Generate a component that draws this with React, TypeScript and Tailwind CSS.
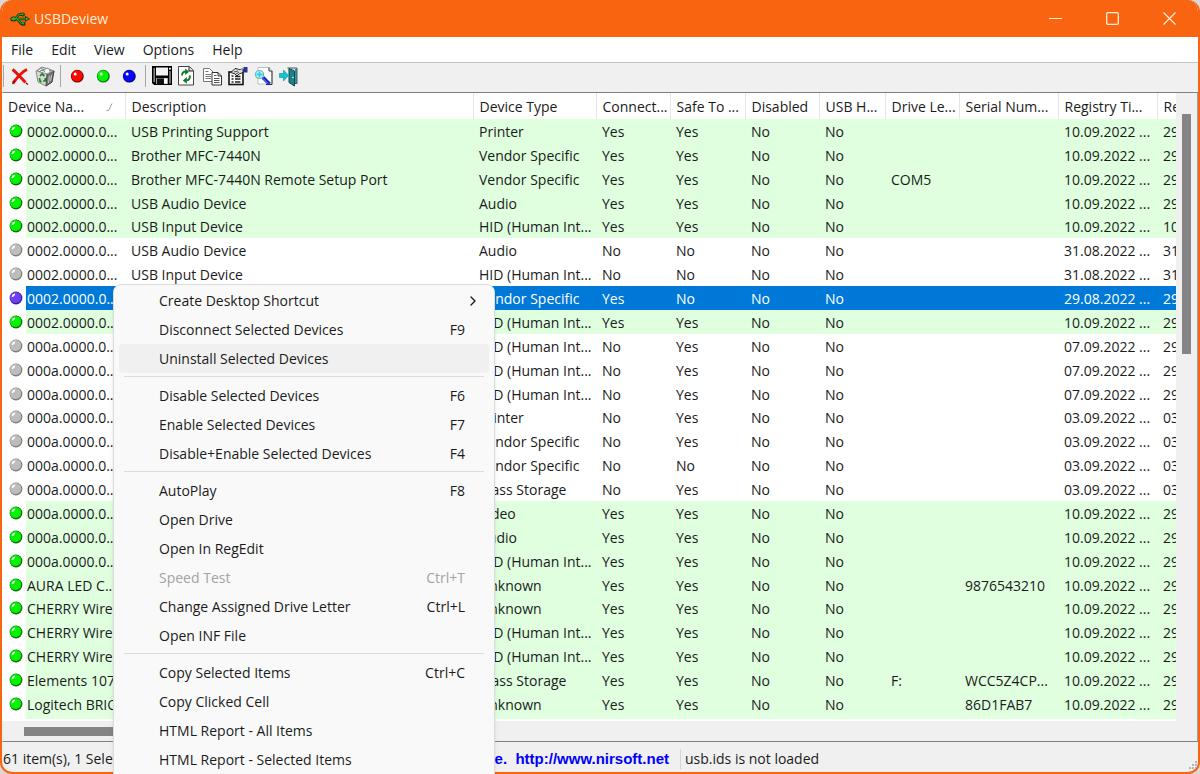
import React from 'react';
import { ChevronRight } from 'lucide-react';

type State = 'on' | 'off' | 'selected';

interface Device {
  state: State;
  cells: string[];
}

interface MenuEntry {
  label: string;
  shortcut?: string;
  disabled?: boolean;
  hover?: boolean;
  submenu?: boolean;
}

const COLUMNS = [
  { title: 'Device Na...', width: 'w-[123px]' },
  { title: 'Description', width: 'w-[348px]' },
  { title: 'Device Type', width: 'w-[123px]' },
  { title: 'Connect...', width: 'w-[74px]' },
  { title: 'Safe To ...', width: 'w-[75px]' },
  { title: 'Disabled', width: 'w-[74px]' },
  { title: 'USB H...', width: 'w-[66px]' },
  { title: 'Drive Le...', width: 'w-[74px]' },
  { title: 'Serial Num...', width: 'w-[99px]' },
  { title: 'Registry Ti...', width: 'w-[99px]' },
  { title: 'Re', width: 'w-[99px]' },
];

const d = (
  state: State, name: string, desc: string, type: string, connected: string,
  safe: string, date: string, last: string, drive = '', serial = ''
): Device => ({
  state,
  cells: [name, desc, type, connected, safe, 'No', 'No', drive, serial, date + ' ...', last],
});

const DEVICES: Device[] = [
  d('on', '0002.0000.0...', 'USB Printing Support', 'Printer', 'Yes', 'Yes', '10.09.2022', '29'),
  d('on', '0002.0000.0...', 'Brother MFC-7440N', 'Vendor Specific', 'Yes', 'Yes', '10.09.2022', '29'),
  d('on', '0002.0000.0...', 'Brother MFC-7440N Remote Setup Port', 'Vendor Specific', 'Yes', 'Yes', '10.09.2022', '29', 'COM5'),
  d('on', '0002.0000.0...', 'USB Audio Device', 'Audio', 'Yes', 'Yes', '10.09.2022', '29'),
  d('on', '0002.0000.0...', 'USB Input Device', 'HID (Human Int...', 'Yes', 'Yes', '10.09.2022', '10'),
  d('off', '0002.0000.0...', 'USB Audio Device', 'Audio', 'No', 'No', '31.08.2022', '31'),
  d('off', '0002.0000.0...', 'USB Input Device', 'HID (Human Int...', 'No', 'No', '31.08.2022', '31'),
  d('selected', '0002.0000.0...', '', 'Vendor Specific', 'Yes', 'No', '29.08.2022', '29'),
  d('on', '0002.0000.0...', '', 'HID (Human Int...', 'Yes', 'Yes', '10.09.2022', '29'),
  d('off', '000a.0000.0...', '', 'HID (Human Int...', 'No', 'Yes', '07.09.2022', '29'),
  d('off', '000a.0000.0...', '', 'HID (Human Int...', 'No', 'Yes', '07.09.2022', '29'),
  d('off', '000a.0000.0...', '', 'HID (Human Int...', 'No', 'Yes', '07.09.2022', '29'),
  d('off', '000a.0000.0...', '', 'Printer', 'No', 'Yes', '03.09.2022', '03'),
  d('off', '000a.0000.0...', '', 'Vendor Specific', 'No', 'Yes', '03.09.2022', '03'),
  d('off', '000a.0000.0...', '', 'Vendor Specific', 'No', 'No', '03.09.2022', '03'),
  d('off', '000a.0000.0...', '', 'Mass Storage', 'No', 'Yes', '03.09.2022', '03'),
  d('on', '000a.0000.0...', '', 'Video', 'Yes', 'Yes', '10.09.2022', '29'),
  d('on', '000a.0000.0...', '', 'Audio', 'Yes', 'Yes', '10.09.2022', '29'),
  d('on', '000a.0000.0...', '', 'HID (Human Int...', 'Yes', 'Yes', '10.09.2022', '29'),
  d('on', 'AURA LED C...', '', 'Unknown', 'Yes', 'Yes', '10.09.2022', '29', '', '9876543210'),
  d('on', 'CHERRY Wire...', '', 'Unknown', 'Yes', 'Yes', '10.09.2022', '29'),
  d('on', 'CHERRY Wire...', '', 'HID (Human Int...', 'Yes', 'Yes', '10.09.2022', '29'),
  d('on', 'CHERRY Wire...', '', 'HID (Human Int...', 'Yes', 'Yes', '10.09.2022', '29'),
  d('on', 'Elements 107...', '', 'Mass Storage', 'Yes', 'Yes', '10.09.2022', '29', 'F:', 'WCC5Z4CP...'),
  d('on', 'Logitech BRIO', '', 'Unknown', 'Yes', 'Yes', '10.09.2022', '29', '', '86D1FAB7'),
];

const MENU: MenuEntry[][] = [
  [
    { label: 'Create Desktop Shortcut', submenu: true },
    { label: 'Disconnect Selected Devices', shortcut: 'F9' },
    { label: 'Uninstall Selected Devices', hover: true },
  ],
  [
    { label: 'Disable Selected Devices', shortcut: 'F6' },
    { label: 'Enable Selected Devices', shortcut: 'F7' },
    { label: 'Disable+Enable Selected Devices', shortcut: 'F4' },
  ],
  [
    { label: 'AutoPlay', shortcut: 'F8' },
    { label: 'Open Drive' },
    { label: 'Open In RegEdit' },
    { label: 'Speed Test', shortcut: 'Ctrl+T', disabled: true },
    { label: 'Change Assigned Drive Letter', shortcut: 'Ctrl+L' },
    { label: 'Open INF File' },
  ],
  [
    { label: 'Copy Selected Items', shortcut: 'Ctrl+C' },
    { label: 'Copy Clicked Cell' },
    { label: 'HTML Report - All Items' },
    { label: 'HTML Report - Selected Items' },
  ],
];

const BALL: Record<State, { fill: string; edge: string }> = {
  on: { fill: '#00f400', edge: '#0b6b0b' },
  off: { fill: '#bdbdbd', edge: '#7d7d7d' },
  selected: { fill: '#7040f0', edge: '#30209a' },
};

const Ball = ({ fill, edge }: { fill: string; edge: string }) => (
  <svg viewBox="0 0 14 14" className="h-[14px] w-[14px] shrink-0">
    <circle cx="7" cy="7" r="6.4" fill={edge} />
    <circle cx="6.6" cy="6.5" r="5.6" fill={fill} />
    <path d="M3.4 5.8A3 3 0 0 1 6 3.4" stroke="#fff" strokeWidth="1.8" fill="none" />
  </svg>
);

const UsbIcon = () => (
  <svg viewBox="0 0 20 14" className="h-[14px] w-5">
    <g stroke="#10300c" strokeWidth="2.6" fill="none">
      <path d="M3 7H17M5 7L9 2.5H12M7 7L11 11.5H13" />
    </g>
    <ellipse cx="3.5" cy="7" rx="3.2" ry="2.5" fill="#10300c" />
    <path d="M15 3.8L20 7L15 9.8Z" fill="#10300c" />
    <circle cx="12.8" cy="2.5" r="2" fill="#10300c" />
    <rect x="11.5" y="9.8" width="3.8" height="3.8" fill="#10300c" />
    <g stroke="#2f9a26" strokeWidth="1.2" fill="none">
      <path d="M3 6.8H17M5 7L9 2.5H12M7 7L11 11.2H13" />
    </g>
    <ellipse cx="3.4" cy="6.8" rx="2.2" ry="1.6" fill="#35b02c" />
    <circle cx="12.7" cy="2.3" r="1.1" fill="#35b02c" />
    <rect x="12.2" y="10.4" width="2" height="2" fill="#35b02c" />
    <path d="M16 5.2L18.6 7L16 8.6Z" fill="#35b02c" />
  </svg>
);

const ToolIcon = ({ children }: { children: React.ReactNode }) => (
  <svg viewBox="0 0 26 26" className="h-[26px] w-[26px]">{children}</svg>
);

const DeleteIcon = () => (
  <ToolIcon>
    <path d="M6.5 6.5C10 9 14 14 19.5 19.5M21 6.5C15 9 11 15 7 20" stroke="#e81008" strokeWidth="2.9" fill="none" />
    <path d="M20 20L22 21.5M6.5 21L9 18" stroke="#7a0800" strokeWidth="1.3" />
  </ToolIcon>
);

const RecycleIcon = () => (
  <ToolIcon>
    <path d="M4 8L10 4L22 8L20 19L14 23L6 19Z" fill="#d9d9d9" stroke="#888" />
    <path d="M15 11L22 8L20 19L14 23Z" fill="#777" stroke="#444" />
    <path d="M5 8L9 5L12 7L15 5L21 8L15 11Z" fill="#f7f7f7" stroke="#888" />
    <path d="M7.5 8.5L10 7L13 8.5M17 8L19 7.5" stroke="#666" fill="none" />
    <path d="M8 13L10 11L12.5 13M13.5 15L13 18H11M7.5 15L8 18L9.5 19" stroke="#128a1c" strokeWidth="1.7" fill="none" />
    <path d="M17.5 13L16.5 20M19.7 12L18.5 18" stroke="#c8c8c8" />
  </ToolIcon>
);

const DotIcon = ({ fill, edge }: { fill: string; edge: string }) => (
  <ToolIcon>
    <circle cx="13.3" cy="13.2" r="6.4" fill={edge} />
    <circle cx="13" cy="12.8" r="5.6" fill={fill} />
    <circle cx="11.2" cy="11" r="1.5" fill="#fff" />
  </ToolIcon>
);

const SaveIcon = () => (
  <ToolIcon>
    <path d="M4 3H24V22H6L4 20Z" fill="#000" />
    <path d="M6.2 5V19M22 8V20.5" stroke="#9a9a9a" strokeWidth="1.4" />
    <rect x="8" y="4.5" width="12" height="8" fill="#f4f4f4" />
    <rect x="21" y="4.8" width="1.8" height="1.8" fill="#fff" />
    <rect x="8" y="15" width="12" height="6" fill="#a8a8a8" />
    <rect x="9" y="15.5" width="7" height="5.5" fill="#111" />
    <rect x="16" y="15.5" width="3" height="5" fill="#fff" />
  </ToolIcon>
);

const RefreshIcon = () => (
  <ToolIcon>
    <path d="M4.5 3.5H15.5L19.5 7.5V22H4.5Z" fill="#fff" stroke="#444" />
    <path d="M15 3.5V8H19.5" fill="#ddd" stroke="#222" />
    <path d="M8 12.5C8 9.5 9.5 8.5 12 8.5" stroke="#117a28" strokeWidth="1.9" fill="none" />
    <path d="M11.2 5.4L15.2 8.7L11.2 12Z" fill="#117a28" />
    <path d="M16 12.5C16 16 14.5 17.4 12 17.4" stroke="#117a28" strokeWidth="1.9" fill="none" />
    <path d="M12.8 14.1L8.8 17.4L12.8 20.7Z" fill="#117a28" />
  </ToolIcon>
);

const CopyIcon = () => (
  <ToolIcon>
    <path d="M3.5 5.5H9.5L13 9V18.5H3.5Z" fill="#fff" stroke="#777" />
    <path d="M5.5 8.5H8.5M5.5 11.5H11M5.5 13.5H11M5.5 15.5H11" stroke="#777" />
    <path d="M12 9.5H18L21.5 13V22H12Z" fill="#fff" stroke="#333" />
    <path d="M18 9.5V13H21.5" fill="none" stroke="#333" />
    <path d="M14 12.5H16.5M14 15.5H19.5M14 17.5H19.5M14 19.5H19.5" stroke="#555" />
  </ToolIcon>
);

const PropertiesIcon = () => (
  <ToolIcon>
    <rect x="3" y="9" width="14" height="12.5" fill="#fff" stroke="#111" strokeWidth="1.6" />
    <path d="M5.5 13H7.5M5.5 16H7.5M5.5 19H7.5M9 16H14.5M9 19H14.5M9 13.5H14.5" stroke="#222" strokeWidth="1.3" />
    <path d="M5 9.5L9 5.5L14 6.5L17 5V9.5L13 11L11 13L9 11Z" fill="#ddd" stroke="#222" />
    <path d="M8 9L12 8M10 11L13 9" stroke="#555" />
    <rect x="17" y="4" width="4.5" height="5.5" fill="#27358e" />
    <path d="M12 5H18" stroke="#fff" />
  </ToolIcon>
);

const FindIcon = () => (
  <ToolIcon>
    <path d="M6 4.5H17L20 7.5V21H6Z" fill="#fff" stroke="#c0c0c0" />
    <path d="M20 8V21.5H14M17 4.5V8H20" stroke="#333" fill="none" />
    <circle cx="7.5" cy="11.5" r="4" fill="#c8f8fa" stroke="#80a8b4" strokeWidth="1.2" />
    <path d="M7.5 8.5V14.5M4.5 11.5H10.5" stroke="#20d8e8" strokeWidth="1.8" />
    <path d="M11 14.5L17.5 21" stroke="#1028c8" strokeWidth="3.6" />
    <path d="M11 15.5L16 20.5" stroke="#7890f8" />
  </ToolIcon>
);

const ExitIcon = () => (
  <ToolIcon>
    <path d="M9.5 5H19V20.5H16" fill="#cfe4e6" stroke="#555" />
    <path d="M11 5.5L16.5 8V23L11 19.5Z" fill="#18838f" stroke="#12474e" />
    <path d="M18 6V20" stroke="#167c88" strokeWidth="1.6" />
    <circle cx="15" cy="14.5" r="0.8" fill="#eee" />
    <path d="M1.5 10.5H5.5V7L10.5 12.5L5.5 18V14.5H1.5Z" fill="#12c4d6" stroke="#0c8f9e" strokeWidth="0.6" />
  </ToolIcon>
);

const ToolButton = ({ title, children }: { title: string; children: React.ReactNode }) => (
  <button aria-label={title} className="h-[26px] w-[26px] shrink-0">{children}</button>
);

const Divider = () => <div className="h-[22px] w-px shrink-0 bg-[#a5a5a5]" />;

const rowClass = (state: State) => {
  if (state === 'selected') return 'bg-[#0078d7] text-white';
  return state === 'on' ? 'bg-[#dfffdf]' : 'bg-white';
};

const TitleBar = () => (
  <header className="flex h-[37px] shrink-0 items-center bg-[#f8640f] pl-2 text-[#ffeeda]">
    <UsbIcon />
    <h1 className="flex-1 pl-1">USBDeview</h1>
    <button aria-label="Minimize" className="flex h-full w-[57px] items-center justify-center">
      <svg viewBox="0 0 13 13" className="h-[13px] w-[13px]"><path d="M0 6.5H13" stroke="currentColor" /></svg>
    </button>
    <button aria-label="Maximize" className="flex h-full w-[57px] items-center justify-center">
      <svg viewBox="0 0 13 13" className="h-[13px] w-[13px]" fill="none" stroke="currentColor" strokeWidth="1.3">
        <rect x="0.7" y="0.7" width="11.6" height="11.6" rx="1.2" />
      </svg>
    </button>
    <button aria-label="Close" className="flex h-full w-[57px] items-center justify-center">
      <svg viewBox="0 0 13 13" className="h-[13px] w-[13px]"><path d="M0.5 0.5L12.5 12.5M12.5 0.5L0.5 12.5" stroke="currentColor" strokeWidth="1.2" /></svg>
    </button>
  </header>
);

const Toolbar = () => (
  <div className="flex h-[30px] shrink-0 items-center border-t border-[#c4c4c4] bg-[#f0f0f0] pb-[3px] pl-px">
    <Divider />
    <div className="flex px-[2px]">
      <ToolButton title="Disconnect"><DeleteIcon /></ToolButton>
      <ToolButton title="Uninstall"><RecycleIcon /></ToolButton>
    </div>
    <Divider />
    <div className="flex px-[3px]">
      <ToolButton title="Disable"><DotIcon fill="#fa0a00" edge="#800000" /></ToolButton>
      <ToolButton title="Enable"><DotIcon fill="#00f400" edge="#0b6b0b" /></ToolButton>
      <ToolButton title="Disable and enable"><DotIcon fill="#0808f8" edge="#000080" /></ToolButton>
    </div>
    <Divider />
    <div className="flex px-[2px]">
      <ToolButton title="Save"><SaveIcon /></ToolButton>
      <ToolButton title="Refresh"><RefreshIcon /></ToolButton>
      <ToolButton title="Copy"><CopyIcon /></ToolButton>
      <ToolButton title="Properties"><PropertiesIcon /></ToolButton>
      <ToolButton title="Find"><FindIcon /></ToolButton>
      <ToolButton title="Exit"><ExitIcon /></ToolButton>
    </div>
  </div>
);

const DeviceTable = () => (
  <table className="h-full w-[1254px] table-fixed border-collapse text-left whitespace-nowrap">
    <thead>
      <tr className="h-[26px]">
        {COLUMNS.map((col, i) => (
          <th key={col.title} className={`${col.width} border-r border-[#e5e5e5] bg-white pt-[2px] pb-0 pl-[6px] font-normal`}>
            {i === 0 ? (
              <span className="flex items-center justify-between pr-3">
                {col.title}
                <svg viewBox="0 0 7 8" className="h-2 w-[7px]"><path d="M0.5 7.5H2.5L6 0.5" stroke="#999" fill="none" /></svg>
              </span>
            ) : col.title}
          </th>
        ))}
      </tr>
    </thead>
    <tbody>
      {DEVICES.map((dev, r) => (
        <tr key={r} className={rowClass(dev.state)}>
          {dev.cells.map((cell, i) =>
            i === 0 ? (
              <td key={i} className="overflow-hidden p-0">
                <div className="flex h-full items-center">
                  <span className="flex h-full w-6 shrink-0 items-center bg-white pl-[7px]">
                    <Ball {...BALL[dev.state]} />
                  </span>
                  <span className="pt-[2px] pl-px">{cell}</span>
                </div>
              </td>
            ) : (
              <td key={i} className="overflow-hidden pt-[2px] pb-0 pl-[6px]">{cell}</td>
            )
          )}
        </tr>
      ))}
    </tbody>
  </table>
);

const ContextMenu = () => (
  <div
    role="menu"
    className="absolute top-[284px] left-[113px] w-[382px] rounded-t-lg border border-[#dcdcdc] bg-[#f9f9f9] px-[5px] pt-px pb-1 shadow-md"
  >
    {MENU.map((group, g) => (
      <div key={g} role="group">
        {g > 0 && <hr className="mx-[5px] mt-[3px] mb-1 border-[#dcdcdc]" />}
        {group.map((item) => (
          <button
            key={item.label}
            role="menuitem"
            disabled={item.disabled}
            className={`flex h-[29px] w-full items-center justify-between rounded pr-6 pl-10 ${
              item.disabled ? 'text-[#a3a3a3]' : 'text-[#1b1b1b]'
            } ${item.hover ? 'bg-[#f0f0f0]' : ''}`}
          >
            {item.label}
            {item.submenu ? <ChevronRight className="-mr-4 h-4 w-4" /> : <span>{item.shortcut}</span>}
          </button>
        ))}
      </div>
    ))}
  </div>
);

export default function App() {
  return (
    <div className="relative h-screen overflow-hidden bg-[#dcd8d4] font-['Open_Sans',sans-serif] text-[14px] leading-5 text-[#1b1b1b]">
      <div className="flex h-full flex-col overflow-hidden rounded-xl border-x-2 border-b-2 border-[#f8640f] bg-[#f0f0f0]">
        <TitleBar />
        <nav className="flex h-[25px] shrink-0 items-center bg-white">
          {['File', 'Edit', 'View', 'Options', 'Help'].map((name) => (
            <button key={name} className="px-[9px]">{name}</button>
          ))}
        </nav>
        <Toolbar />

        <main className="flex min-h-0 flex-1 flex-col border-x border-y border-x-[#a0a0a0] border-y-[#808080] border-l-transparent">
          <div className="flex min-h-0 flex-1">
            <div className="-ml-px flex min-w-0 flex-1 flex-col overflow-hidden border-b-2 border-white bg-white">
              <div className="min-h-0 flex-1">
                <DeviceTable />
              </div>
              {/* top edge of the next row */}
              <div className="ml-6 h-[3px] shrink-0 bg-[#dfffdf]" />
            </div>
            <div className="flex w-[21px] shrink-0 justify-center bg-[#f0f0f0] pt-[21px]">
              <div className="h-[240px] w-[9px] bg-[#858585]" />
            </div>
          </div>
          <div className="flex h-5 shrink-0 items-center bg-[#f0f0f0] pl-[21px]">
            <div className="h-[9px] w-[320px] bg-[#858585]" />
          </div>
        </main>

        <footer className="flex h-[30px] shrink-0 items-center pt-1 whitespace-nowrap">
          <span className="w-[340px] pl-px">61 item(s), 1 Selected</span>
          <a
            href="http://www.nirsoft.net"
            className="w-[338px] pr-[11px] text-right font-['Liberation_Sans',sans-serif] text-[15px] font-bold whitespace-pre text-[#0000f8]"
          >
            {'NirSoft Freeware.  http://www.nirsoft.net'}
          </a>
          <span className="flex-1 border-l border-[#d5d5d5] pl-[4px]">usb.ids is not loaded</span>
          <svg viewBox="0 0 10 10" className="mb-px h-[10px] w-[10px] self-end" fill="#b5b5b5">
            <path d="M7 0h2v2H7zM7 3h2v2H7zM7 6h2v2H7zM4 3h2v2H4zM4 6h2v2H4zM1 6h2v2H1z" />
          </svg>
        </footer>
      </div>
      <ContextMenu />
    </div>
  );
}
